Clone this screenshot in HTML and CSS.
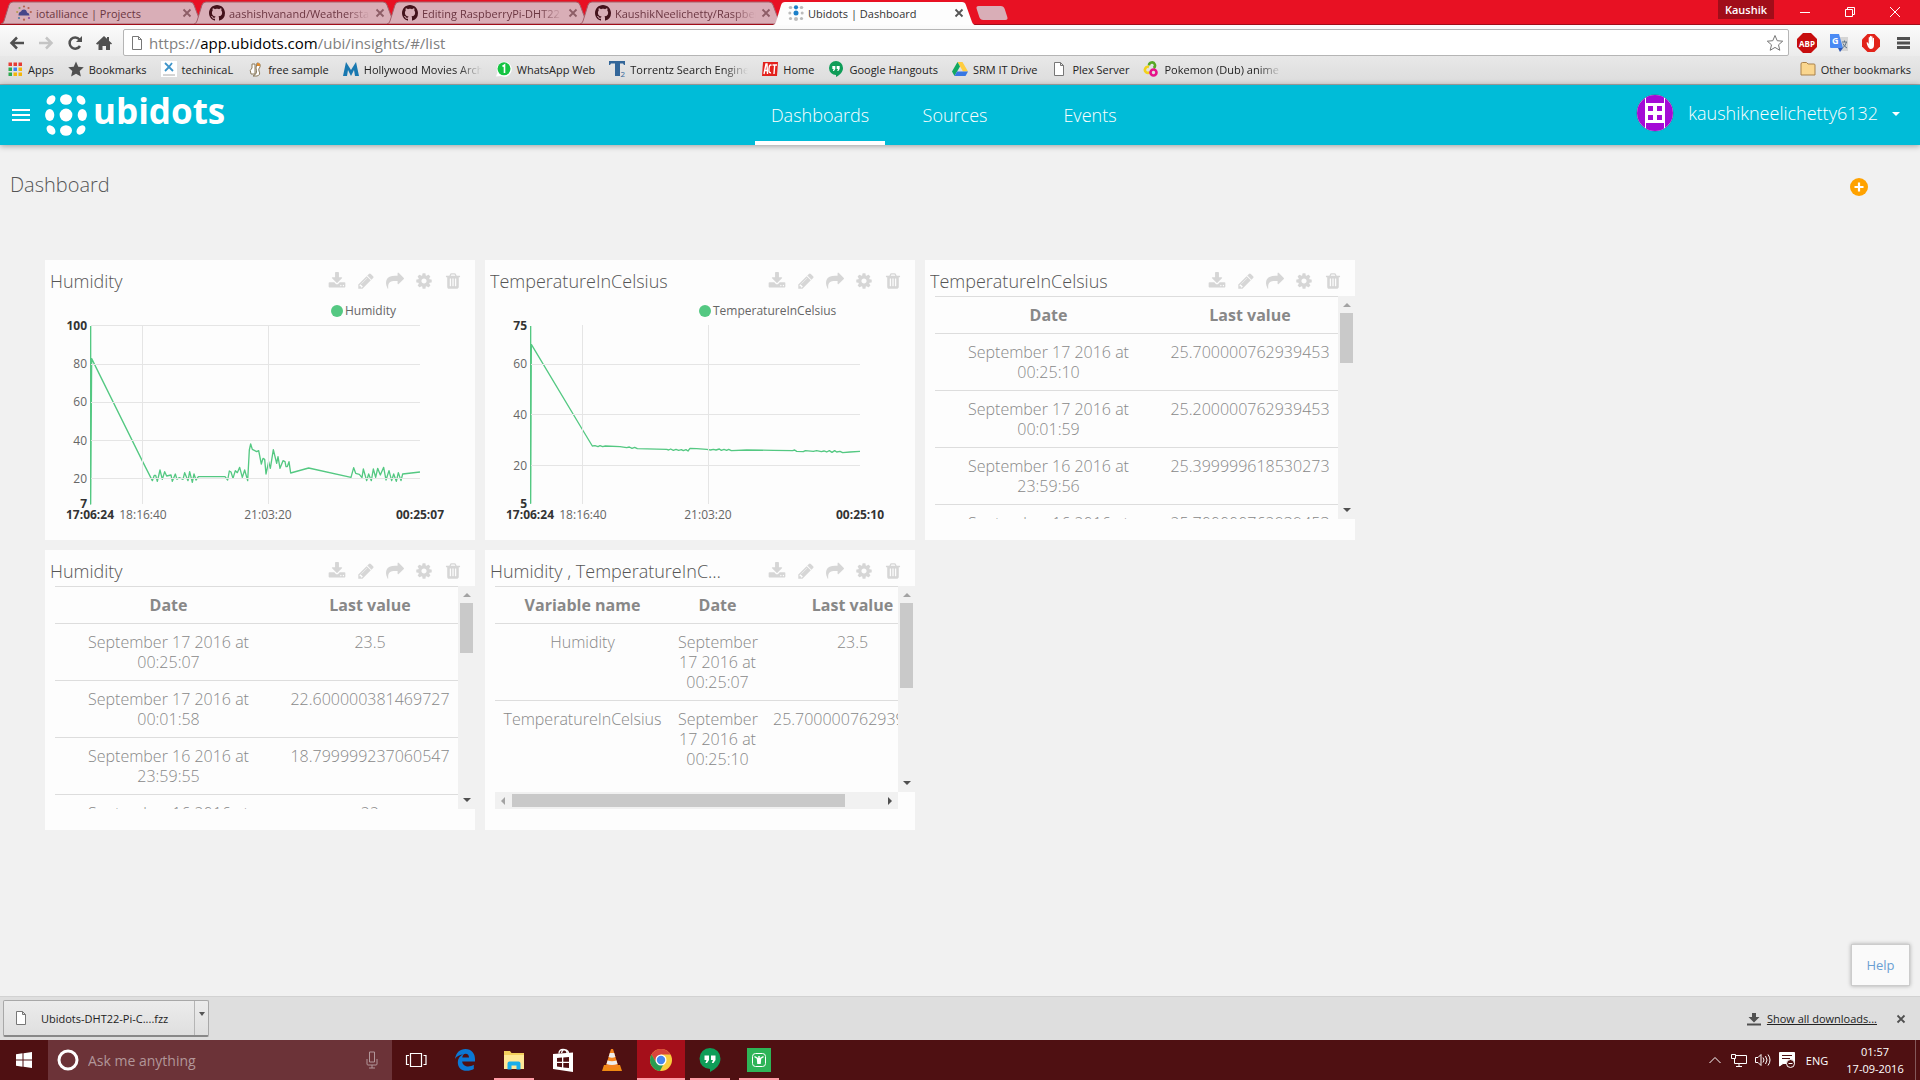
FILE: index.html
```html
<!DOCTYPE html>
<html lang="en">
<head>
<meta charset="utf-8">
<title>Ubidots | Dashboard</title>
<link rel="stylesheet" href="styles.css">
</head>
<body>
<svg class="defs" aria-hidden="true">
  <symbol id="tab-shape" viewBox="0 0 204 24" preserveAspectRatio="none"><path d="M1 24 Q3 24 4 21 L9 5 Q10 2 13 2 H190 Q193 2 194 5 L200 21 Q201 24 204 24Z"/></symbol>
  <symbol id="github" viewBox="0 0 16 16"><path d="M8 0C3.580 0 0 3.580 0 8c0 3.540 2.290 6.530 5.470 7.590.4.070.55-.17.55-.38 0-.19-.01-.82-.01-1.490-2.010.37-2.530-.49-2.690-.94-.09-.23-.48-.94-.82-1.130-.28-.15-.68-.52-.01-.53.63-.01 1.080.58 1.230.82.72 1.210 1.870.87 2.330.66.07-.52.28-.87.51-1.070-1.780-.2-3.640-.89-3.640-3.950 0-.87.31-1.590.82-2.150-.08-.2-.36-1.020.08-2.120 0 0 .67-.21 2.200.82.64-.18 1.320-.27 2-.27s1.360.09 2 .27c1.530-1.040 2.200-.82 2.200-.82.44 1.100.16 1.920.08 2.120.51.56.82 1.270.82 2.150 0 3.070-1.870 3.750-3.650 3.950.29.25.54.73.54 1.480 0 1.070-.01 1.930-.01 2.200 0 .21.15.46.55.38A8.010 8.010 0 0 0 16 8c0-4.420-3.580-8-8-8z"/></symbol>
  <symbol id="close" viewBox="0 0 10 10"><path d="M1.500 1.500l7 7M8.500 1.500l-7 7" fill="none" stroke="currentColor" stroke-width="1.800"/></symbol>
  <symbol id="page" viewBox="0 0 16 16"><path d="M3.500 1.500h6l3 3v10h-9zM9.500 1.500v3h3" fill="#fff" stroke="#777"/></symbol>
  <symbol id="download" viewBox="0 0 1792 1792"><path d="M1344 1344q0-26-19-45t-45-19-45 19-19 45 19 45 45 19 45-19 19-45zm256 0q0-26-19-45t-45-19-45 19-19 45 19 45 45 19 45-19 19-45zm128-224v320q0 40-28 68t-68 28h-1472q-40 0-68-28t-28-68v-320q0-40 28-68t68-28h465l135 136q58 56 136 56t136-56l136-136h464q40 0 68 28t28 68zm-325-569q17 41-14 70l-448 448q-18 19-45 19t-45-19l-448-448q-31-29-14-70 17-39 59-39h256v-448q0-26 19-45t45-19h256q26 0 45 19t19 45v448h256q42 0 59 39z"/></symbol>
  <symbol id="pencil" viewBox="0 0 1792 1792"><path d="M491 1536l91-91-235-235-91 91v107h128v128h107zm523-928q0-22-22-22-10 0-17 7l-542 542q-7 7-7 17 0 22 22 22 10 0 17-7l542-542q7-7 7-17zm-54-192l416 416-832 832h-416v-416zm683 96q0 53-37 90l-166 166-416-416 166-165q36-38 90-38 53 0 91 38l235 234q37 39 37 91z"/></symbol>
  <symbol id="share" viewBox="0 0 1792 1792"><path d="M1792 640q0 26-19 45l-512 512q-19 19-45 19t-45-19-19-45v-256h-224q-98 0-175.500 6t-154 21.500-133 42.500-105.500 69.500-80 101-48.500 138.500-17.500 181q0 55 5 123 0 6 2.500 23.500t2.500 26.500q0 15-8.500 25t-23.500 10q-16 0-28-17-7-9-13-22t-13.500-30-10.500-24q-127-285-127-451 0-199 53-333 162-403 875-403h224v-256q0-26 19-45t45-19 45 19l512 512q19 19 19 45z"/></symbol>
  <symbol id="gear" viewBox="0 0 1792 1792"><path d="M1152 896q0-106-75-181t-181-75-181 75-75 181 75 181 181 75 181-75 75-181zm512-109v222q0 12-8 23t-20 13l-185 28q-19 54-39 91 35 50 107 138 10 12 10 25t-9 23q-27 37-99 108t-94 71q-12 0-26-9l-138-108q-44 23-91 38-16 136-29 186-7 28-36 28h-222q-14 0-24.500-8.500t-11.500-21.500l-28-184q-49-16-90-37l-141 107q-10 9-25 9-14 0-25-11-126-114-165-168-7-10-7-23 0-12 8-23 15-21 51-66.500t54-70.500q-27-50-41-99l-183-27q-13-2-21-12.500t-8-23.500v-222q0-12 8-23t19-13l186-28q14-46 39-92-40-57-107-138-10-12-10-24 0-10 9-23 26-36 98.500-107.500t94.500-71.500q13 0 26 10l138 107q44-23 91-38 16-136 29-186 7-28 36-28h222q14 0 24.500 8.500t11.500 21.500l28 184q49 16 90 37l142-107q9-9 24-9 13 0 25 10 129 119 165 170 7 8 7 22 0 12-8 23-15 21-51 66.500t-54 70.500q26 50 41 98l183 28q13 2 21 12.500t8 23.500z"/></symbol>
  <symbol id="trash" viewBox="0 0 1792 1792"><path d="M704 1376v-704q0-14-9-23t-23-9h-64q-14 0-23 9t-9 23v704q0 14 9 23t23 9h64q14 0 23-9t9-23zm256 0v-704q0-14-9-23t-23-9h-64q-14 0-23 9t-9 23v704q0 14 9 23t23 9h64q14 0 23-9t9-23zm256 0v-704q0-14-9-23t-23-9h-64q-14 0-23 9t-9 23v704q0 14 9 23t23 9h64q14 0 23-9t9-23zm-544-992h448l-48-117q-7-9-17-11h-317q-10 2-17 11zm928 32v64q0 14-9 23t-23 9h-96v948q0 83-47 143.500t-113 60.500h-832q-66 0-113-58.500t-47-141.500v-952h-96q-14 0-23-9t-9-23v-64q0-14 9-23t23-9h309l70-167q15-37 54-63t79-26h320q40 0 79 26t54 63l70 167h309q14 0 23 9t9 23z"/></symbol>
  <symbol id="hangouts" viewBox="0 0 24 24"><path d="M12 0a10.500 10.500 0 0 0 0 21v3c6-3 10.500-7.500 10.500-13.500A10.500 10.500 0 0 0 12 0z" fill="#0f9d58"/><path d="M6.500 7.500h4.500v4.500l-2 3H7.300l1.200-3h-2zM13 7.500h4.500v4.500l-2 3h-1.700l1.200-3h-2z" fill="#fff"/></symbol>
</svg>

<header class="browser">
  <div class="tabstrip">
    <div class="tabs" role="tablist">
      <div class="tab" role="tab">
        <svg class="tab-bg"><use href="#tab-shape"/></svg>
        <svg class="ico" viewBox="0 0 16 16"><path d="M2.500 10.500h11q0-2.500-2.500-3-.5-3-3-3T5 6.500q-2.500.5-2.500 4z" fill="#474689"/><g fill="#b5614f"><circle cx="8" cy="1.500" r="1.100"/><circle cx="12.500" cy="3" r="1.100"/><circle cx="3.500" cy="3" r="1.100" fill="#7e9a62"/><circle cx="14.800" cy="7" r="1.100"/><circle cx="1.200" cy="7" r="1.100" fill="#b59a4f"/><circle cx="3" cy="13" r="1.100" fill="#557fa0"/><circle cx="8" cy="14.700" r="1.100"/><circle cx="13" cy="13" r="1.100" fill="#8b4f9d"/></g></svg>
        <span class="tab-title">iotalliance | Projects</span>
        <button class="tab-close" aria-label="Close tab"><svg><use href="#close"/></svg></button>
      </div>
      <div class="tab" role="tab">
        <svg class="tab-bg"><use href="#tab-shape"/></svg>
        <svg class="ico gh"><use href="#github"/></svg>
        <span class="tab-title fade">aashishvanand/Weatherstation</span>
        <button class="tab-close" aria-label="Close tab"><svg><use href="#close"/></svg></button>
      </div>
      <div class="tab" role="tab">
        <svg class="tab-bg"><use href="#tab-shape"/></svg>
        <svg class="ico gh"><use href="#github"/></svg>
        <span class="tab-title fade">Editing RaspberryPi-DHT22</span>
        <button class="tab-close" aria-label="Close tab"><svg><use href="#close"/></svg></button>
      </div>
      <div class="tab" role="tab">
        <svg class="tab-bg"><use href="#tab-shape"/></svg>
        <svg class="ico gh"><use href="#github"/></svg>
        <span class="tab-title fade">KaushikNeelichetty/RaspberryPi</span>
        <button class="tab-close" aria-label="Close tab"><svg><use href="#close"/></svg></button>
      </div>
      <div class="tab active" role="tab" aria-selected="true">
        <svg class="tab-bg"><use href="#tab-shape"/></svg>
        <svg class="ico" viewBox="0 0 16 16"><g fill="#bbb"><ellipse cx="2.500" cy="2.500" rx="1.800" ry="1.500"/><ellipse cx="13.500" cy="2.500" rx="1.800" ry="1.500"/><circle cx="1.800" cy="8" r="1.500"/><circle cx="14.200" cy="8" r="1.500"/><circle cx="2.500" cy="13.500" r="1.600"/><circle cx="8" cy="14" r="2"/><circle cx="13.500" cy="13.500" r="1.600"/></g><circle cx="8" cy="2.300" r="2.100" fill="#1b7fc9"/><circle cx="8" cy="8" r="2.500" fill="#1b7fc9"/></svg>
        <span class="tab-title">Ubidots | Dashboard</span>
        <button class="tab-close" aria-label="Close tab"><svg><use href="#close"/></svg></button>
      </div>
      <button class="newtab" aria-label="New tab"></button>
    </div>
    <div class="window-controls">
      <button class="profile">Kaushik</button>
      <button aria-label="Minimize"><svg viewBox="0 0 12 12"><path d="M1 6.500h10"/></svg></button>
      <button aria-label="Restore"><svg viewBox="0 0 12 12"><path d="M1.500 3.500h7v7h-7zM3.500 3.500v-2h7v7h-2"/></svg></button>
      <button aria-label="Close"><svg viewBox="0 0 12 12"><path d="M1 1l10 10M11 1L1 11"/></svg></button>
    </div>
  </div>

  <div class="toolbar">
    <button aria-label="Back"><svg viewBox="0 0 16 16"><path d="M15 8H3M8 2.500L2.500 8 8 13.500" stroke="#505050" stroke-width="2.500" fill="none"/></svg></button>
    <button aria-label="Forward"><svg viewBox="0 0 16 16"><path d="M1 8h12M8 2.500L13.500 8 8 13.500" stroke="#c4c4c4" stroke-width="2.500" fill="none"/></svg></button>
    <button aria-label="Reload"><svg viewBox="0 0 16 16"><path d="M13 11a5.600 5.600 0 1 1-.5-6.500" stroke="#505050" stroke-width="2.500" fill="none"/><path d="M15 1v6H9z" fill="#505050"/></svg></button>
    <button aria-label="Home"><svg viewBox="0 0 16 16"><path d="M0 8.500L8 1l3 2.800V2h2v3.700l3 2.800-1 1-1-.8V15h-4v-4H6.500v4H2.500V8.700l-1.300 1z" fill="#505050"/></svg></button>
    <div class="omnibox">
      <svg class="ico"><use href="#page"/></svg>
      <div class="url">https://<b>app.ubidots.com</b>/ubi/insights/#/list</div>
      <button aria-label="Bookmark this page"><svg viewBox="0 0 18 18"><path d="M9 1.500l2.200 5.200 5.500.5-4.200 3.600 1.300 5.500L9 13.400l-4.800 2.900 1.300-5.500L1.300 7.200l5.500-.5z" fill="#fff" stroke="#777"/></svg></button>
    </div>
    <div class="extensions">
      <button aria-label="Adblock Plus"><svg viewBox="0 0 20 20"><path d="M6 0h8l6 6v8l-6 6H6l-6-6V6z" fill="#c70d0e"/><text x="10" y="13.500" text-anchor="middle" class="abp">ABP</text></svg></button>
      <button aria-label="Google Translate"><svg viewBox="0 0 20 20"><path d="M8 4h11v14h-7z" fill="#d5d5d5"/><path d="M1 1h9l4 14H2q-1 0-1-1z" fill="#4a8af4"/><path d="M9 15h5l-3 4z" fill="#2d57b5"/><text x="3" y="11" class="gt">G</text><path d="M13 9h5M15.500 7.500V9M17.500 9q-1 4-4 6M14 10.500q1 3 4 4.500" stroke="#5c7387" fill="none"/></svg></button>
      <button aria-label="AdBlock"><svg viewBox="0 0 20 20"><path d="M6.500 1h7L19 6.500v7L13.500 19h-7L1 13.500v-7z" fill="#e2231a"/><path d="M5.500 9.500l1-.2 1.200 1.700V4.500q.7-.8 1.200 0V9V3.300q.7-.9 1.300 0V9V3.600q.7-.9 1.300 0V9.500l.3-4.500q.8-.8 1.200.2v6.800q0 4-3.500 4-2.500 0-4-6.500z" fill="#fff"/></svg></button>
      <button aria-label="Menu"><svg viewBox="0 0 20 20"><path d="M4 5.500h13M4 10h13M4 14.500h13" stroke="#505050" stroke-width="3" /></svg></button>
    </div>
  </div>

  <nav class="bookmarks" aria-label="Bookmarks">
    <a href="#"><svg class="ico" viewBox="0 0 16 16"><g fill="#e53c35"><path d="M1.500 1.500h3.500V5H1.500zM6.500 1.500H10V5H6.500z"/><path d="M11.500 1.500H15V5h-3.500z"/></g><path d="M1.500 6.500h3.500V10H1.500z" fill="#2da94f"/><path d="M6.500 6.500H10V10H6.500z" fill="#3b82f0"/><path d="M11.500 6.500H15V10h-3.500zM6.500 11.500H10V15H6.500zM11.500 11.500H15V15h-3.500z" fill="#f3b60b"/><path d="M1.500 11.500h3.500V15H1.500z" fill="#2da94f"/></svg><span>Apps</span></a>
    <a href="#"><svg class="ico" viewBox="0 0 16 16"><path d="M8 .5l2.300 5.200 5.500.6-4.100 3.700 1.200 5.500L8 12.700l-4.900 2.800L4.300 10 .2 6.300l5.500-.6z" fill="#505050"/></svg><span>Bookmarks</span></a>
    <a href="#"><svg class="ico" viewBox="0 0 16 16"><path d="M0 0h16v16H0z" fill="#fff"/><path d="M4 2l4 4 3-4M8 6l4 4M8 6l-4 4" stroke="#3d94c9" stroke-width="1.800" fill="none"/><path d="M2 14h12" stroke="#aaa"/></svg><span>techinicaL</span></a>
    <a href="#"><svg class="ico" viewBox="0 0 16 16"><path d="M5 3h3v10H4q-2-4 1-6zM10 2q4 0 3 4-2 2-1 4 2 4-2 5H6q5-2 3-8z" fill="#fff" stroke="#8a7a5c"/><path d="M10 2q4 0 3 3h-3z" fill="#e08b2c"/></svg><span>free sample</span></a>
    <a href="#"><svg class="ico" viewBox="0 0 16 16"><path d="M0 15L3 1l5 8 5-8 3 14h-4l-1-6-3 6-3-6-1 6z" fill="#1878b0"/></svg><span class="long fade">Hollywood Movies Archive</span></a>
    <a href="#"><svg class="ico" viewBox="0 0 16 16"><path d="M0 15.500l1.500-4A7.500 7.500 0 1 1 5 15z" fill="#fff"/><circle cx="8" cy="7.800" r="6.500" fill="#15c443"/><path d="M6.500 5.500L8.500 4v8" stroke="#fff" stroke-width="1.600" fill="none"/></svg><span>WhatsApp Web</span></a>
    <a href="#"><svg class="ico" viewBox="0 0 16 16"><path d="M0 0h16v4h-1L14 2.500h-3V15H6V2.500H2L1 4H0z" fill="#336699"/><text x="11.500" y="15.500" class="tz">2</text></svg><span class="long fade">Torrentz Search Engine</span></a>
    <a href="#"><svg class="ico" viewBox="0 0 16 16"><path d="M1 1h15l-1 14H0z" fill="#e3211c"/><path d="M2 13l2-10h1l.5 10M3 9.500h2M9.500 4.500q-2-2-2.500 3t2 4M10.500 4H15M12.700 4l-.7 9" stroke="#fff" stroke-width="1.400" fill="none"/></svg><span>Home</span></a>
    <a href="#"><svg class="ico"><use href="#hangouts"/></svg><span>Google Hangouts</span></a>
    <a href="#"><svg class="ico" viewBox="0 0 16 16"><path d="M5.500 1h5l5.500 9.500h-5z" fill="#ffcd40"/><path d="M5.500 1L0 10.500 2.500 15 8 5.500z" fill="#11a861"/><path d="M5 10.500h11L13.500 15h-11z" fill="#3777e3"/></svg><span>SRM IT Drive</span></a>
    <a href="#"><svg class="ico"><use href="#page"/></svg><span>Plex Server</span></a>
    <a href="#"><svg class="ico" viewBox="0 0 16 16"><g fill="none" stroke-width="2.600"><path d="M6 4.500a3 3 0 1 1 4.500 2.500" stroke="#55a824"/><path d="M6 6a3 3 0 1 0 1 5" stroke="#f2d21b"/><circle cx="10.500" cy="11.500" r="3" stroke="#e6128a"/></g></svg><span class="long fade">Pokemon (Dub) anime download</span></a>
    <a href="#" class="other"><svg class="ico" viewBox="0 0 16 16"><path d="M1 3q0-1.500 1.500-1.500h4L8 3h6q1 0 1 1v10H1z" fill="#fad68e" stroke="#a9814a"/></svg><span>Other bookmarks</span></a>
  </nav>
</header>

<header class="appbar">
  <div class="brand">
    <button class="burger" aria-label="Menu"><svg viewBox="0 0 18 14"><path d="M0 2h18M0 7h18M0 12h18" stroke="#fff" stroke-width="2"/></svg></button>
    <a href="#" class="logo">
      <svg viewBox="0 0 42 42" fill="#fff"><ellipse cx="6" cy="6" rx="3.800" ry="5.200" transform="rotate(40 6 6)"/><ellipse cx="21" cy="5.500" rx="6" ry="5.200"/><ellipse cx="36" cy="6" rx="3.800" ry="5.200" transform="rotate(-40 36 6)"/><ellipse cx="4.700" cy="21" rx="4.600" ry="6"/><circle cx="21" cy="21" r="6.400"/><ellipse cx="37.300" cy="21" rx="4.600" ry="6"/><ellipse cx="6" cy="36" rx="3.800" ry="5.200" transform="rotate(-40 6 36)"/><ellipse cx="21" cy="36.500" rx="6" ry="5.200"/><ellipse cx="36" cy="36" rx="3.800" ry="5.200" transform="rotate(40 36 36)"/></svg>
      <span>ubidots</span>
    </a>
  </div>
  <nav class="mainnav">
    <a href="#" class="current">Dashboards</a>
    <a href="#">Sources</a>
    <a href="#">Events</a>
  </nav>
  <button class="user">
    <svg class="avatar" viewBox="0 0 38 38"><clipPath id="av"><circle cx="19" cy="19" r="18"/></clipPath><circle cx="19" cy="19" r="18.500" fill="#37758c"/><g clip-path="url(#av)"><path d="M0 0h38v38H0z" fill="#fff"/><path d="M10 0h18v9H10zM0 10h9v18H0zM29 10h9v18h-9zM10 29h18v9H10z" fill="#a40ad6"/><path d="M10 10h18v18H10z" fill="#fff"/><path d="M12 12h5v5h-5zM21 12h5v5h-5zM12 21h5v5h-5zM21 21h5v5h-5zM3 10h6L9 3zM35 10h-6V3zM3 28h6v7zM35 28h-6v7z" fill="#a40ad6"/></g></svg>
    <span>kaushikneelichetty6132</span>
    <svg class="caret" viewBox="0 0 8 4"><path d="M0 0h8L4 4z" fill="#fff"/></svg>
  </button>
</header>

<main>
  <div class="title-row">
    <h1>Dashboard</h1>
    <button class="add" aria-label="Add widget"><svg viewBox="0 0 18 18"><circle cx="9" cy="9" r="9" fill="#ffa200"/><path d="M9 4.500v9M4.500 9h9" stroke="#fff" stroke-width="2.200"/></svg></button>
  </div>

  <div class="grid">
    <section class="card">
      <div class="card-head"><h2>Humidity</h2><div class="tools"><button aria-label="Download"><svg><use href="#download"/></svg></button><button aria-label="Edit"><svg><use href="#pencil"/></svg></button><button aria-label="Share"><svg><use href="#share"/></svg></button><button aria-label="Settings"><svg><use href="#gear"/></svg></button><button aria-label="Delete"><svg><use href="#trash"/></svg></button></div></div>
      <svg class="chart" viewBox="0 36 430 244" role="img" aria-label="Humidity over time">
        <circle cx="292" cy="51" r="6" fill="#54c882"/><text x="300" y="55">Humidity</text>
        <g class="series" transform="translate(-45 -110) scale(.33333)"><path d="M272 528V1062L275 626 428 935 457 992 463 976 467 976 472 994 480 960 487 988 494 965 500 978 513 975 517 994 526 972 531 988 538 983 549 988 554 968 564 992 569 965 577 997 582 972 588 990 595 980 675 980 683 990 688 963 693 966 699 985 706 962 712 968 719 952 727 982 734 960 743 992 748 900 752 882 757 898 770 905 776 902 784 942 789 925 794 928 798 972 806 935 811 955 820 899 830 940 834 920 840 955 849 932 855 935 858 950 862 950 867 935 872 969 926 954 1053 982 1061 953 1067 970 1078 973 1086 983 1090 957 1100 992 1106 972 1114 992 1120 957 1127 982 1133 955 1141 975 1151 952 1158 990 1167 962 1175 992 1181 972 1189 994 1195 968 1203 992 1208 972 1260 966"/></g>
        <path class="gridlines" d="M46 65.500H375M46 104.500H375M46 142.500H375M46 180.500H375M46 218.500H375M97.500 65V244M223.500 65V244"/>
        <g class="y"><text x="42" y="70" class="b">100</text><text x="42" y="108">80</text><text x="42" y="146">60</text><text x="42" y="185">40</text><text x="42" y="223">20</text><text x="42" y="248" class="b">7</text></g>
        <g class="x"><text x="45" y="259" class="b">17:06:24</text><text x="98" y="259">18:16:40</text><text x="223" y="259">21:03:20</text><text x="375" y="259" class="b">00:25:07</text></g>
      </svg>
    </section>

    <section class="card">
      <div class="card-head"><h2>TemperatureInCelsius</h2><div class="tools"><button aria-label="Download"><svg><use href="#download"/></svg></button><button aria-label="Edit"><svg><use href="#pencil"/></svg></button><button aria-label="Share"><svg><use href="#share"/></svg></button><button aria-label="Settings"><svg><use href="#gear"/></svg></button><button aria-label="Delete"><svg><use href="#trash"/></svg></button></div></div>
      <svg class="chart" viewBox="0 36 430 244" role="img" aria-label="Temperature over time">
        <circle cx="220" cy="51" r="6" fill="#54c882"/><text x="228" y="55">TemperatureInCelsius</text>
        <g class="series" transform="translate(-5 -10) scale(.33333)"><path d="M152 228V760L154 283 308 540 337 588 345 587 354 590 360 587 368 590 376 588 420 590 440 593 448 591 456 595 464 592 472 596 560 598 566 600 572 597 580 601 588 598 596 601 604 599 610 602 618 599 624 603 630 595 650 596 680 598 692 600 700 598 708 600 718 597 724 601 732 598 740 601 746 598 754 602 800 600 880 601 938 602 944 600 950 604 970 605 976 602 1000 604 1010 602 1024 605 1032 603 1040 606 1048 602 1056 607 1064 602 1070 606 1080 604 1088 608 1110 606 1140 604"/></g>
        <path class="gridlines" d="M46 104.500H375M46 154.500H375M46 205.500H375M97.500 65V244M223.500 65V244"/>
        <g class="y"><text x="42" y="70" class="b">75</text><text x="42" y="108">60</text><text x="42" y="159">40</text><text x="42" y="210">20</text><text x="42" y="248" class="b">5</text></g>
        <g class="x"><text x="45" y="259" class="b">17:06:24</text><text x="98" y="259">18:16:40</text><text x="223" y="259">21:03:20</text><text x="375" y="259" class="b">00:25:10</text></g>
      </svg>
    </section>

    <section class="card">
      <div class="card-head"><h2>TemperatureInCelsius</h2><div class="tools"><button aria-label="Download"><svg><use href="#download"/></svg></button><button aria-label="Edit"><svg><use href="#pencil"/></svg></button><button aria-label="Share"><svg><use href="#share"/></svg></button><button aria-label="Settings"><svg><use href="#gear"/></svg></button><button aria-label="Delete"><svg><use href="#trash"/></svg></button></div></div>
      <div class="scroller">
        <div class="pane"><table class="two">
          <thead><tr><th>Date</th><th>Last value</th></tr></thead>
          <tbody>
            <tr><td>September 17 2016 at 00:25:10</td><td>25.700000762939453</td></tr>
            <tr><td>September 17 2016 at 00:01:59</td><td>25.200000762939453</td></tr>
            <tr><td>September 16 2016 at 23:59:56</td><td>25.399999618530273</td></tr>
            <tr><td>September 16 2016 at 23:57:53</td><td>25.700000762939453</td></tr>
          </tbody>
        </table></div>
        <div class="vbar"><i class="up"></i><i class="thumb"></i><i class="down"></i></div>
      </div>
    </section>

    <section class="card first">
      <div class="card-head"><h2>Humidity</h2><div class="tools"><button aria-label="Download"><svg><use href="#download"/></svg></button><button aria-label="Edit"><svg><use href="#pencil"/></svg></button><button aria-label="Share"><svg><use href="#share"/></svg></button><button aria-label="Settings"><svg><use href="#gear"/></svg></button><button aria-label="Delete"><svg><use href="#trash"/></svg></button></div></div>
      <div class="scroller">
        <div class="pane"><table class="two">
          <thead><tr><th>Date</th><th>Last value</th></tr></thead>
          <tbody>
            <tr><td>September 17 2016 at 00:25:07</td><td>23.5</td></tr>
            <tr><td>September 17 2016 at 00:01:58</td><td>22.600000381469727</td></tr>
            <tr><td>September 16 2016 at 23:59:55</td><td>18.799999237060547</td></tr>
            <tr><td>September 16 2016 at 23:57:52</td><td>22</td></tr>
          </tbody>
        </table></div>
        <div class="vbar"><i class="up"></i><i class="thumb"></i><i class="down"></i></div>
      </div>
    </section>

    <section class="card">
      <div class="card-head"><h2>Humidity , TemperatureInCelsius</h2><div class="tools"><button aria-label="Download"><svg><use href="#download"/></svg></button><button aria-label="Edit"><svg><use href="#pencil"/></svg></button><button aria-label="Share"><svg><use href="#share"/></svg></button><button aria-label="Settings"><svg><use href="#gear"/></svg></button><button aria-label="Delete"><svg><use href="#trash"/></svg></button></div></div>
      <div class="scroller both">
        <div class="pane"><table class="three">
          <thead><tr><th>Variable name</th><th>Date</th><th>Last value</th></tr></thead>
          <tbody>
            <tr><td>Humidity</td><td>September 17 2016 at 00:25:07</td><td>23.5</td></tr>
            <tr><td>TemperatureInCelsius</td><td>September 17 2016 at 00:25:10</td><td>25.700000762939453</td></tr>
          </tbody>
        </table></div>
        <div class="vbar"><i class="up"></i><i class="thumb tall"></i><i class="down"></i></div>
        <div class="hbar"><i class="left"></i><i class="thumb"></i><i class="right"></i></div>
      </div>
    </section>
  </div>
  <button class="help">Help</button>
</main>

<footer>
  <div class="shelf">
    <div class="dl">
      <button class="dl-file"><svg class="ico"><use href="#page"/></svg><span>Ubidots-DHT22-Pi-C....fzz</span></button>
      <button class="dl-more" aria-label="More"><svg viewBox="0 0 6 4"><path d="M0 0h6L3 4z" fill="#555"/></svg></button>
    </div>
    <a href="#" class="show-all"><svg viewBox="0 0 14 14"><path d="M5 1h4v4h3.500L7 10.500 1.500 5H5z" fill="#505050"/><path d="M0 12.500h14" stroke="#505050" stroke-width="2"/></svg><span>Show all downloads...</span></a>
    <button class="shelf-close" aria-label="Close downloads"><svg><use href="#close"/></svg></button>
  </div>
  <div class="taskbar">
    <button class="start" aria-label="Start"><svg viewBox="0 0 16 16"><path d="M0 2.200l6.500-.9v6.200H0zM7.500 1.200L16 0v7.500H7.500zM0 8.500h6.500v6.200L0 13.800zM7.500 8.500H16V16l-8.500-1.200z" fill="#fff"/></svg></button>
    <div class="search">
      <svg class="ring" viewBox="0 0 22 22"><circle cx="11" cy="11" r="9" fill="none" stroke="#fff" stroke-width="3"/></svg>
      <input type="text" placeholder="Ask me anything" aria-label="Search">
      <svg class="mic" viewBox="0 0 12 18"><path d="M3.500 1h5v10h-5zM1 8v5q0 1 1 1h8q1 0 1-1V8M6 14v3M3 17h6" fill="none" stroke="#b29699"/></svg>
    </div>
    <div class="apps">
      <button aria-label="Task view"><svg viewBox="0 0 24 24"><path d="M6.500 5.500h11v13h-11zM5 7.500H2.500v9H5M19.500 7.500H22v9h-2.500" fill="none" stroke="#fff" stroke-width="1.200"/></svg></button>
      <button aria-label="Edge"><svg viewBox="0 0 24 24"><path d="M2 11C3 4.500 7 1 12.500 1 18.500 1 22 5.500 22 11v2.500H9.200c.2 3.500 3.300 5 6 5 2 0 4-.6 5.600-1.700V21c-2 1.200-4.300 1.800-7 1.800-5.800 0-9-3.600-9-8.600 0-3.400 2-6.500 5.200-8C6 6.800 3.500 8.500 2 11zm7.300-1.500h6.700c0-2.500-1.300-3.800-3.300-3.800-2 0-3.200 1.700-3.400 3.800z" fill="#0b78d4"/></svg></button>
      <button class="open" aria-label="File Explorer"><svg viewBox="0 0 24 24"><path d="M2 3h6l1.500 2H22v16H2z" fill="#f4cf5d"/><path d="M2 7h20v14H2z" fill="#ffe796"/><path d="M5.500 21.500v-6q0-2 2-2h9q2 0 2 2v6h-4v-4h-5v4z" fill="#19aeea"/></svg></button>
      <button aria-label="Store"><svg viewBox="0 0 24 24"><path d="M8 5.500q0-4 4-4t4 3.500M10.500 5q1-4.500 5-3 2 1 2 3" fill="none" stroke="#fff" stroke-width="1.300"/><path d="M2 6l20-1.500V24L2 21z" fill="#fff"/><path d="M6 10l5-.4v4.200H6zM12.300 9.500l5.700-.5v4.800h-5.700zM6 15h5v4.200l-5-.6zM12.300 15H18v5l-5.700-.6z" fill="#4f1012"/></svg></button>
      <button aria-label="VLC"><svg viewBox="0 0 24 24"><path d="M4 17h16l2 6H2z" fill="#f08a13"/><path d="M11 1h2l5.500 18q-6.500 3-13 0z" fill="#f5841f"/><path d="M9.800 5h4.400l1.200 4q-3.400 1.300-6.800 0zM7.500 12.500q4.500 1.500 9 0l1 3.500q-5.500 2-11 0z" fill="#eee"/></svg></button>
      <button class="open focus" aria-label="Chrome"><svg viewBox="0 0 24 24"><circle cx="12" cy="12" r="11" fill="#f9cd3d"/><path d="M2.500 6.500A11 11 0 0 1 21.500 6.500H12L7.200 14.700z" fill="#d9453a"/><path d="M2.500 6.500l4.800 8.300q2.500 3 7.200 1.500L11 23A11 11 0 0 1 2.500 6.500z" fill="#2a9c51"/><circle cx="12" cy="12" r="5.500" fill="#fff"/><circle cx="12" cy="12" r="4.200" fill="#4787ed"/></svg></button>
      <button class="open" aria-label="Hangouts"><svg><use href="#hangouts"/></svg></button>
      <button class="open" aria-label="Saavn"><svg viewBox="0 0 24 24"><path d="M0 0h24v24H0z" fill="#2eb457"/><path d="M8.500 5.500h7q3 0 3 3v7q0 3-3 3h-7q-3 0-3-3v-7q0-3 3-3z" fill="none" stroke="#fff"/><path d="M7.500 8.500l3 2 .5 5.500M16.500 8.500l-3 2-.5 5.500M12 8v8" fill="none" stroke="#fff" stroke-width="1.500"/></svg></button>
    </div>
    <div class="tray">
      <button aria-label="Show hidden icons"><svg viewBox="0 0 16 16"><path d="M2.500 11L8 5.500 13.500 11"/></svg></button>
      <button aria-label="Network"><svg viewBox="0 0 16 16"><path d="M5 3.500h10.500v8H3.500V7M8 11.500v3M5 14.500h6M.5 2.500h4v4h-4z"/></svg></button>
      <button aria-label="Volume"><svg viewBox="0 0 16 16"><path d="M.5 5.500H3l3-3v11l-3-3H.5zM8 5.500q2 2.500 0 5M10.500 4q3 4 0 8M13 2.500q4 5.500 0 11"/></svg></button>
      <button aria-label="Notifications"><svg viewBox="0 0 16 16"><path d="M.5.500h15v11H4L.5 14z" fill="#fff"/><path d="M3 3.500h10M3 6.500h8" stroke="#4f1012"/><circle cx="11.500" cy="11.500" r="4" fill="#4f1012"/><path d="M9.500 11.500h4"/></svg></button>
      <span class="lang">ENG</span>
      <div class="clock"><span>01:57</span><span>17-09-2016</span></div>
    </div>
  </div>
</footer>
</body>
</html>
```
FILE: styles.css
```css
* { box-sizing: border-box; }

body {
  margin: 0;
  min-height: 100vh;
  display: flex;
  flex-direction: column;
  background: #f1f1f1;
  font-family: "Open Sans", "Noto Sans", sans-serif;
  font-size: 11px;
  color: #222;
}

button, input { font: inherit; color: inherit; background: none; border: 0; padding: 0; margin: 0; }
a { color: inherit; text-decoration: none; }
button { display: flex; align-items: center; justify-content: center; }
svg { display: block; flex: none; }
.defs { position: absolute; width: 0; height: 0; }
.ico { width: 16px; height: 16px; }
.fade { -webkit-mask-image: linear-gradient(to left, transparent, #000 24px); mask-image: linear-gradient(to left, transparent, #000 24px); }

/* Browser frame */
.tabstrip { height: 25px; display: flex; background: #e81123; border-bottom: 1px solid #a10d19; }
.tabs { flex: 1; display: flex; min-width: 0; }
.tab { position: relative; flex: 0 1 204px; min-width: 0; height: 25px; padding: 1px 11px 0 16px; display: flex; align-items: center; gap: 4px; color: #6b3641; }
.tab + .tab { margin-left: -11px; }
.tab > * { position: relative; }
.tab .tab-bg { position: absolute; left: 0; top: 0; width: 100%; height: 24px; fill: #d9aeb7; stroke: #a4606b; }
.tab.active { color: #333; z-index: 1; }
.tab.active .tab-bg { height: 25px; fill: #fdfdfd; stroke: none; }
.gh { fill: #43121b; }
.tab-title { flex: 1; white-space: nowrap; overflow: hidden; }
.tab-close svg { width: 10px; height: 10px; }
.tab-close { width: 12px; color: #8d5d66; }
.active .tab-close { color: #555; }
.newtab { flex: none; width: 28px; height: 14px; margin: 6px 0 0 2px; background: #d9aeb7; border-radius: 3px; transform: skewX(18deg); }
.window-controls { display: flex; margin-right: 3px; }
.window-controls button { width: 45px; height: 24px; }
.window-controls button.profile { width: 56px; height: 19px; margin-right: 8px; background: #a10d19; color: #fff; font-weight: 600; }
.window-controls svg { width: 12px; height: 12px; fill: none; stroke: #fff; }

.toolbar { height: 31px; padding: 4px 7px 0 2px; display: flex; background: linear-gradient(#fbfbfb, #ececec); }
.toolbar > button { width: 29px; height: 27px; }
.toolbar > button svg { width: 16px; height: 16px; }
.omnibox { flex: 1; height: 27px; margin-left: 5px; padding: 0 4px 0 5px; display: flex; align-items: center; gap: 4px; background: #fff; border: 1px solid #b5b5b5; border-radius: 2px; }
.url { flex: 1; font-size: 15px; color: #808080; }
.url b { font-weight: 400; color: #000; }
.omnibox button svg { width: 18px; height: 18px; }
.extensions { display: flex; padding-left: 2px; margin-right: -6px; }
.extensions button { width: 32px; height: 27px; }
.extensions svg { width: 20px; height: 20px; }
.abp { font-size: 8px; font-weight: 700; fill: #fff; }
.gt { font-size: 9px; font-weight: 700; fill: #fff; }
.tz { font-size: 8px; fill: #336699; }

.bookmarks { height: 29px; padding: 0 9px 2px 7px; display: flex; align-items: center; gap: 14px; background: linear-gradient(#e8e8e8, #dcdcdc); border-bottom: 1px solid #a8a8a8; white-space: nowrap; }
.bookmarks a { display: flex; align-items: center; gap: 5px; }
.long { width: 118px; overflow: hidden; }
.other { margin-left: auto; }

/* Application bar */
.appbar { height: 60px; padding: 0 20px 0 10px; display: grid; grid-template-columns: 1fr auto 1fr; background: #00bcd8; color: #fff; box-shadow: 0 1px 6px rgba(0, 0, 0, .35); z-index: 1; font-size: 18px; font-weight: 300; }
.brand { display: flex; align-items: center; gap: 13px; }
.burger { width: 22px; }
.burger svg { width: 18px; height: 14px; }
.logo { display: flex; align-items: center; gap: 6px; }
.logo svg { width: 42px; height: 42px; }
.logo span { font-size: 35px; line-height: 48px; font-weight: 700; padding-bottom: 8px; }
.mainnav { display: flex; gap: 5px; }
.mainnav a { width: 130px; border-bottom: 4px solid transparent; text-align: center; line-height: 60px; height: 60px; }
.mainnav .current { border-color: #fff; }
.user { justify-self: end; gap: 14px; font-weight: 300; padding-bottom: 4px; }
.avatar { width: 38px; height: 38px; }
.caret { width: 8px; height: 4px; margin-top: 2px; }

/* Dashboard */
main { flex: 1; display: flex; flex-direction: column; color: #555; }
.title-row { height: 115px; padding: 24px 52px 0 10px; display: flex; justify-content: space-between; align-items: flex-start; }
h1 { margin: 0; font-size: 20px; line-height: 32px; font-weight: 300; }
.add { margin-top: 9px; }
.add svg { width: 18px; height: 18px; }
.grid { padding: 0 125px 0 45px; display: grid; grid-template-columns: repeat(4, minmax(0, 1fr)); gap: 10px; }
.card { background: #fdfdfd; min-height: 280px; }
.card.first { grid-column: 1; }
.card-head { height: 36px; padding: 6px 13px 0 5px; display: flex; align-items: center; justify-content: space-between; }
h2 { margin: 0; max-width: 232px; overflow: hidden; text-overflow: ellipsis; white-space: nowrap; font-size: 18px; line-height: 30px; font-weight: 300; }
.tools { display: flex; gap: 11px; fill: #d6d6d6; }
.tools svg { width: 18px; height: 18px; }

.chart { width: 100%; height: 244px; font-size: 12px; fill: #666; }
.series path { fill: none; stroke: #54c882; stroke-width: 4; stroke-linejoin: round; }
.gridlines { fill: none; stroke: #e5e5e5; }
.y { text-anchor: end; }
.x { text-anchor: middle; }
.b { font-weight: 700; fill: #333; }

.scroller { height: 223px; padding-left: 10px; display: grid; grid-template-columns: minmax(0, 1fr) 17px; grid-template-rows: minmax(0, 1fr); }
.scroller.both { grid-template-rows: minmax(0, 1fr) 17px; }
.pane { overflow: hidden; }
table { width: 100%; border-collapse: separate; border-spacing: 0; font-size: 16px; line-height: 20px; font-weight: 300; color: #888; text-align: center; }
th, td { padding: 8px; border-top: 1px solid #ddd; vertical-align: top; }
th { font-weight: 700; }
.two th:last-child { width: 176px; }
.three { width: 445px; table-layout: fixed; }
.three th:nth-child(2) { width: 95px; }
.vbar, .hbar { background: #f1f1f1; display: flex; align-items: center; }
.vbar { flex-direction: column; padding: 7px 0; }
.hbar { padding: 0 6px; }
.vbar i, .hbar i { flex: none; border: 4px solid transparent; }
.vbar .up { border-top: 0; border-bottom-color: #a3a3a3; }
.vbar .down { margin-top: auto; border-bottom: 0; border-top-color: #505050; }
.hbar .left { border-left: 0; border-right-color: #a3a3a3; }
.hbar .right { margin-left: auto; border-right: 0; border-left-color: #505050; }
.vbar .thumb { width: 13px; height: 50px; margin-top: 6px; border: 0; background: #c9c9c9; }
.vbar .tall { height: 85px; }
.hbar .thumb { width: 333px; height: 13px; margin-left: 7px; border: 0; background: #c9c9c9; }

.help { align-self: flex-end; margin: auto 10px 10px 0; width: 59px; height: 42px; background: #fafafa; border: 1px solid #ccc; box-shadow: 0 0 4px rgba(0, 0, 0, .3); color: #6b9fd3; font-size: 13px; }

/* Downloads shelf */
.shelf { height: 44px; padding: 0 14px 0 3px; display: flex; align-items: center; background: #dedede; border-top: 1px solid #d2d2d2; }
.dl { display: flex; width: 206px; height: 37px; background: linear-gradient(#ececec, #dfdfdf); border: 1px solid #a8a8a8; border-bottom: 2px solid #888; border-radius: 2px; }
.dl-file { flex: 1; justify-content: flex-start; padding-left: 9px; gap: 12px; }
.dl-more { width: 14px; border-left: 1px solid #b5b5b5; padding-bottom: 8px; }
.dl-more svg { width: 6px; height: 4px; }
.show-all { margin-left: auto; display: flex; align-items: center; gap: 6px; text-decoration: underline; }
.show-all svg { width: 14px; height: 14px; }
.shelf-close { margin-left: 19px; color: #505050; }
.shelf-close svg { width: 10px; height: 10px; }

/* Taskbar */
.taskbar { height: 40px; display: flex; background: #4f1012; color: #fff; }
.start { width: 48px; }
.start svg { width: 16px; height: 16px; }
.search { width: 344px; padding: 0 14px 0 9px; display: flex; align-items: center; background: #6c3338; }
.ring { width: 22px; height: 22px; }
.search input { flex: 1; min-width: 0; height: 40px; padding-left: 9px; font-size: 14px; }
.search input::placeholder { color: #b29699; opacity: 1; }
.mic { width: 12px; height: 18px; }
.apps { display: flex; gap: 1px; }
.apps button { position: relative; width: 48px; height: 40px; }
.apps svg { width: 24px; height: 24px; }
.apps .open::after { content: ""; position: absolute; left: 4px; right: 4px; bottom: 0; height: 2px; background: #ff9ca6; }
.apps .focus { background: #a50f1a; }
.apps .focus::after { left: 0; right: 0; }
.tray { margin-left: auto; padding-right: 4px; display: flex; align-items: center; }
.tray::after { content: ""; width: 1px; height: 40px; margin-left: 5px; background: #83585a; }
.tray button { width: 24px; height: 40px; }
.tray svg { width: 16px; height: 16px; fill: none; stroke: #fff; }
.lang { width: 36px; text-align: center; }
.clock { width: 70px; margin-left: 5px; display: flex; flex-direction: column; align-items: center; line-height: 17px; }
```
